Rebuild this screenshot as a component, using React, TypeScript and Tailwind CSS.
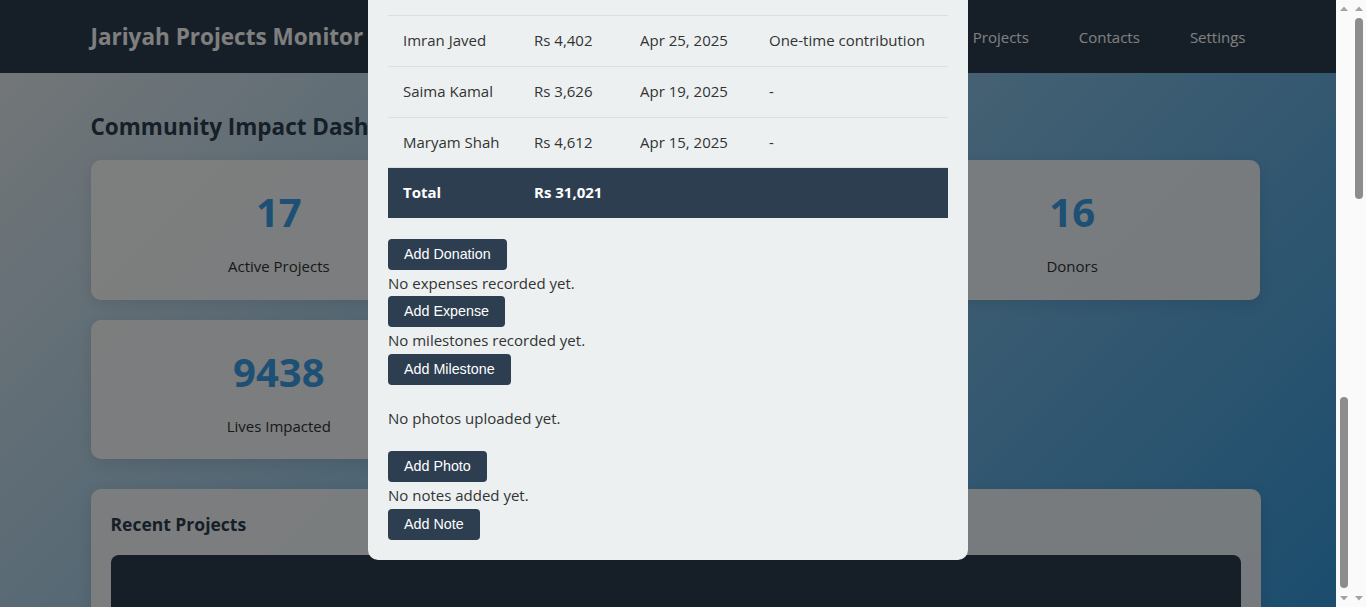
import { useEffect, useLayoutEffect, useRef } from 'react';

const stats = [
  { value: '17', label: 'Active Projects' },
  { value: 'Rs 412,580', label: 'Total Donations' },
  { value: '16', label: 'Donors' },
  { value: '9438', label: 'Lives Impacted' },
  { value: '4', label: 'Completed Projects' },
];

const projects = [
  { name: 'Clean Water Well – Tharparkar', place: 'Mithi, Sindh', status: 'Active', progress: 62 },
  { name: 'Masjid Renovation', place: 'Multan, Punjab', status: 'Active', progress: 48 },
  { name: 'Orphan Education Fund', place: 'Lahore, Punjab', status: 'Active', progress: 75 },
  { name: 'Community Kitchen', place: 'Karachi, Sindh', status: 'Active', progress: 33 },
  { name: 'Solar Pumps for Farmers', place: 'Bahawalpur, Punjab', status: 'Planning', progress: 12 },
  { name: 'Quran Library', place: 'Peshawar, KP', status: 'Active', progress: 81 },
  { name: 'Mobile Health Clinic', place: 'Gilgit, GB', status: 'Active', progress: 57 },
  { name: 'Girls School Classrooms', place: 'Swat, KP', status: 'Active', progress: 40 },
  { name: 'Flood Relief Housing', place: 'Dadu, Sindh', status: 'Completed', progress: 100 },
  { name: 'Hand Pumps Programme', place: 'Umerkot, Sindh', status: 'Active', progress: 66 },
  { name: 'Widow Support Stipends', place: 'Quetta, Balochistan', status: 'Active', progress: 29 },
  { name: 'Tree Plantation Drive', place: 'Islamabad', status: 'Completed', progress: 100 },
];

const donations = [
  { donor: 'Ahmed Raza', amount: 'Rs 5,210', date: 'May 30, 2025', note: 'Monthly pledge' },
  { donor: 'Fatima Noor', amount: 'Rs 4,875', date: 'May 18, 2025', note: 'In memory of parents' },
  { donor: 'Bilal Qureshi', amount: 'Rs 3,986', date: 'May 07, 2025', note: '-' },
  { donor: 'Ayesha Malik', amount: 'Rs 4,310', date: 'May 02, 2025', note: 'Zakat' },
  { donor: 'Imran Javed', amount: 'Rs 4,402', date: 'Apr 25, 2025', note: 'One-time contribution' },
  { donor: 'Saima Kamal', amount: 'Rs 3,626', date: 'Apr 19, 2025', note: '-' },
  { donor: 'Maryam Shah', amount: 'Rs 4,612', date: 'Apr 15, 2025', note: '-' },
];

const details = [
  ['Location', 'Mithi, Tharparkar, Sindh'],
  ['Category', 'Water & Sanitation'],
  ['Start Date', 'Mar 10, 2025'],
  ['Expected Completion', 'Sep 30, 2025'],
  ['Target Amount', 'Rs 50,000'],
  ['Amount Raised', 'Rs 31,021'],
  ['Beneficiaries', '640 people'],
  ['Contact Person', 'Abdul Hameed'],
];

function ActionButton({ label }: { label: string }) {
  return (
    <button className="block rounded-[4px] bg-[#2c3e50] px-[16px] py-[7px] font-['Liberation_Sans',Arial,sans-serif] text-[14.3px] leading-[17px] text-white">
      {label}
    </button>
  );
}

// classic browser scrollbar, drawn because the headless page hides its own
function Scrollbar({ side, thumbTop, thumbHeight }: { side: string; thumbTop: number; thumbHeight: number }) {
  return (
    <div className={`fixed top-0 bottom-0 w-[15px] bg-[#fafafa] ${side}`}>
      <svg className="absolute top-[6px] left-[4px]" width="8" height="5" viewBox="0 0 8 5">
        <polygon points="0,5 4,0.5 8,5" fill="#a3a3a3" />
      </svg>
      <div
        className="absolute left-[3.5px] w-[8px] rounded-full bg-[#8d8d8d]"
        style={{ top: thumbTop, height: thumbHeight }}
      />
      <svg className="absolute bottom-[6px] left-[4px]" width="8" height="5" viewBox="0 0 8 5">
        <polygon points="0,0 8,0 4,4.5" fill="#a3a3a3" />
      </svg>
    </div>
  );
}

function ProjectModal() {
  return (
    <div className="mx-auto my-[47px] w-[600px] rounded-[10px] bg-[#ecf0f1] p-5">
      <div className="mb-3 flex items-center justify-between">
        <h2 className="text-[22.5px] font-bold leading-[38px] text-[#2c3e50]">Clean Water Well – Tharparkar</h2>
        <span className="text-[28px] leading-none text-[#7f8c8d]">×</span>
      </div>
      <div className="mb-4 flex gap-2 text-[13px]">
        <span className="rounded-full bg-[#27ae60] px-3 py-0.5 text-white">Active</span>
        <span className="rounded-full bg-[#3498db] px-3 py-0.5 text-white">Water &amp; Sanitation</span>
      </div>
      <p className="mb-5">
        A deep tube well with a solar powered pump, storage tank and four public taps, providing safe drinking
        water to the families of Mithi and the surrounding villages, who now walk several kilometres every day
        to fetch water.
      </p>
      <div className="mb-5 grid grid-cols-2 gap-x-5 gap-y-3">
        {details.map(([k, v]) => (
          <div key={k} className="rounded-md bg-white px-4 py-2">
            <div className="text-[13px] text-[#7f8c8d]">{k}</div>
            <div className="font-semibold text-[#2c3e50]">{v}</div>
          </div>
        ))}
      </div>
      <div className="mb-6">
        <div className="mb-1 flex justify-between text-[14px]">
          <span>Funding progress</span>
          <span>62%</span>
        </div>
        <div className="h-3 rounded-full bg-[#d5dbdf]">
          <div className="h-3 rounded-full bg-[#3498db]" style={{ width: '62%' }} />
        </div>
      </div>
      <h3 className="mb-2 text-[17.5px] font-bold leading-[30px] text-[#2c3e50]">Impact Summary</h3>
      <p className="mb-6">
        Once complete, the well will serve around 640 people, including two schools and a basic health unit.
        Local volunteers have been trained to maintain the pump and keep the water point clean.
      </p>
      <h3 className="mb-3 text-[17.5px] font-bold leading-[30px] text-[#2c3e50]">Donations</h3>
      <table className="mb-[21px] w-full border-collapse text-left">
        <thead>
          <tr className="bg-[#2c3e50] text-white">
            <th className="w-[131px] px-[15px] py-3">Donor</th>
            <th className="w-[106px] px-[15px] py-3">Amount</th>
            <th className="w-[129px] px-[15px] py-3">Date</th>
            <th className="px-[15px] py-3">Notes</th>
          </tr>
        </thead>
        <tbody>
          {donations.map((d) => (
            <tr key={d.donor} className="border-b border-[#dcdfe1]">
              <td className="px-[15px] py-3 whitespace-nowrap">{d.donor}</td>
              <td className="px-[15px] py-3 whitespace-nowrap">{d.amount}</td>
              <td className="px-[15px] py-3 whitespace-nowrap">{d.date}</td>
              <td className="px-[15px] py-3 whitespace-nowrap">{d.note}</td>
            </tr>
          ))}
          <tr className="bg-[#2c3e50] font-bold text-white">
            <td className="px-[15px] py-3">Total</td>
            <td className="px-[15px] py-3 whitespace-nowrap">Rs 31,021</td>
            <td className="px-[15px] py-3" />
            <td className="px-[15px] py-3" />
          </tr>
        </tbody>
      </table>
      <ActionButton label="Add Donation" />
      <p className="leading-[26.5px]">No expenses recorded yet.</p>
      <ActionButton label="Add Expense" />
      <p className="leading-[26.5px]">No milestones recorded yet.</p>
      <ActionButton label="Add Milestone" />
      <div className="my-5">
        <p className="leading-[26.5px]">No photos uploaded yet.</p>
      </div>
      <ActionButton label="Add Photo" />
      <p className="leading-[26.5px]">No notes added yet.</p>
      <ActionButton label="Add Note" />
    </div>
  );
}

export default function App() {
  const overlayRef = useRef<HTMLDivElement>(null);

  useLayoutEffect(() => {
    const el = overlayRef.current;
    if (el) el.scrollTop = el.scrollHeight;
  }, []);

  useEffect(() => {
    const id = requestAnimationFrame(() => {
      const el = overlayRef.current;
      if (el) el.scrollTop = el.scrollHeight;
    });
    return () => cancelAnimationFrame(id);
  }, []);

  return (
    <div className="mr-[15px] min-h-screen bg-[linear-gradient(135deg,#ecf0f1,#3498db)] bg-fixed font-['Open_Sans',sans-serif] text-[15px] leading-[25.6px] text-[#333]">
      <header className="bg-[#2c3e50] text-white">
        <div className="mx-auto flex h-[73px] max-w-[1170px] items-center justify-between">
          <h1 className="text-[22.5px] font-bold leading-[38px]">Jariyah Projects Monitor</h1>
          <nav className="flex pt-[3px]">
            {['Dashboard', 'Projects', 'Contacts', 'Settings'].map((l) => (
              <a key={l} className="ml-5 px-[15px] text-white">
                {l}
              </a>
            ))}
          </nav>
        </div>
      </header>

      <main className="mx-auto max-w-[1170px] pb-[30px]">
        <h2 className="mt-[39px] mb-[19px] text-[22.5px] font-bold leading-[29px] text-[#2c3e50]">
          Community Impact Dashboard
        </h2>
        <div className="grid grid-cols-3 gap-5">
          {stats.map((s) => (
            <div key={s.label} className="rounded-[10px] bg-white/90 p-5 text-center shadow-[0_4px_15px_rgba(0,0,0,0.1)]">
              <div className="mb-[10px] text-[40px] font-bold leading-[64px] text-[#3aa0e8]">{s.value}</div>
              <div className="text-[#333]">{s.label}</div>
            </div>
          ))}
        </div>

        <section className="mt-[30px] rounded-[10px] bg-white/90 p-5 shadow-[0_4px_15px_rgba(0,0,0,0.1)]">
          <h3 className="mb-4 text-[17.5px] font-bold leading-[30px] text-[#2c3e50]">Recent Projects</h3>
          <div className="rounded-lg bg-[#2c3e50] px-6 pt-16 pb-6 text-white">
            {projects.map((p) => (
              <div key={p.name} className="flex items-center gap-6 border-b border-white/10 py-4">
                <div className="w-[360px]">
                  <div className="font-semibold">{p.name}</div>
                  <div className="text-[14px] text-white/70">{p.place}</div>
                </div>
                <div className="h-2 flex-1 rounded-full bg-white/15">
                  <div className="h-2 rounded-full bg-[#3498db]" style={{ width: `${p.progress}%` }} />
                </div>
                <div className="w-[100px] text-right text-[14px]">{p.status}</div>
              </div>
            ))}
          </div>
        </section>
      </main>

      <div ref={overlayRef} className="fixed top-0 bottom-0 left-0 right-[15px] overflow-y-auto bg-black/50 pr-[15px]">
        <ProjectModal />
      </div>

      <Scrollbar side="right-[15px]" thumbTop={397} thumbHeight={191} />
      <Scrollbar side="right-0" thumbTop={18} thumbHeight={181} />
    </div>
  );
}
